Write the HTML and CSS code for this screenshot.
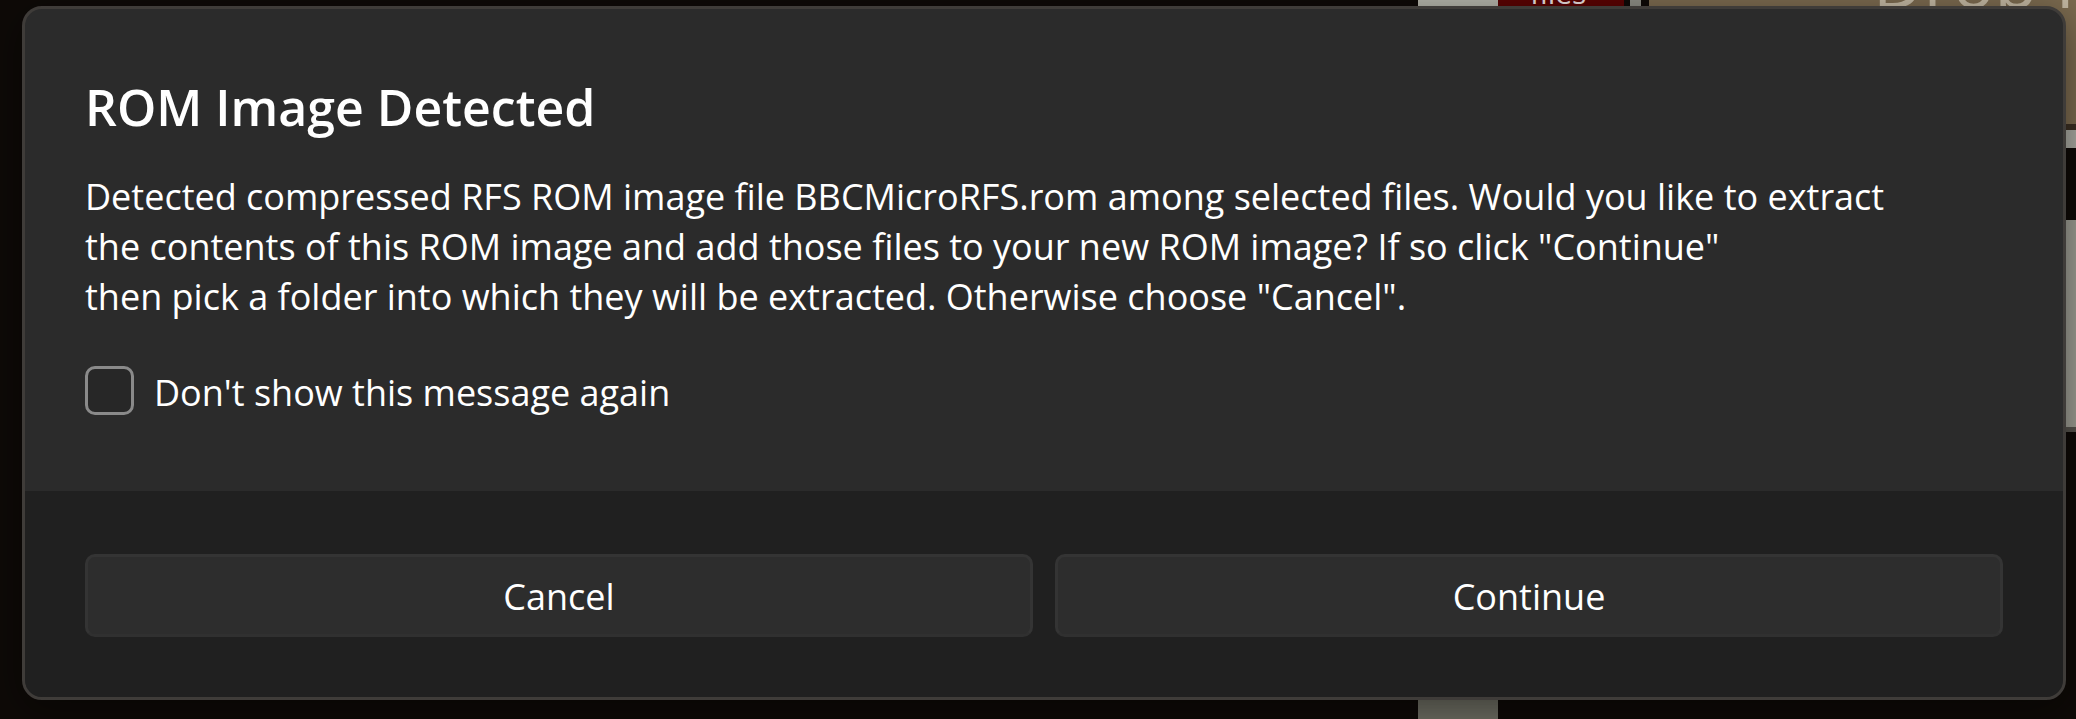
FILE: index.html
```html
<!DOCTYPE html>
<html lang="en">
<head>
<meta charset="utf-8">
<title>ROM Image Detected</title>
<link rel="stylesheet" href="styles.css">
</head>
<body>
<div class="app">
  <div class="app-blank"></div>
  <div class="app-pillar"></div>
  <div class="app-files">
    <div class="file-tile"><span class="file-tile-label">files</span></div>
  </div>
  <div class="app-divider"></div>
  <div class="app-panel">
    <div class="drop-zone"><span class="drop-zone-text">Drop Files</span></div>
    <div class="panel-edge"></div>
    <div class="panel-strip"></div>
    <div class="panel-gap"></div>
    <div class="panel-card">
      <span class="avatar"></span>
      <span class="card-badge"></span>
    </div>
  </div>
</div>

<div class="dialog" role="dialog" aria-labelledby="dlg-title">
  <div class="dialog-body">
    <h1 class="dialog-title" id="dlg-title">ROM Image Detected</h1>
    <p class="dialog-message">Detected compressed RFS ROM image file BBCMicroRFS.rom among selected files. Would you like to extract<br>the contents of this ROM image and add those files to your new ROM image? If so click "Continue"<br>then pick a folder into which they will be extracted. Otherwise choose "Cancel".</p>
    <label class="check">
      <span class="check-box"></span>
      <span class="check-label">Don't show this message again</span>
    </label>
  </div>
  <div class="dialog-footer">
    <button class="btn" type="button">Cancel</button>
    <button class="btn" type="button">Continue</button>
  </div>
</div>
</body>
</html>
```

FILE: styles.css
```css
html, body {
  margin: 0;
  padding: 0;
}

body {
  width: 2076px;
  height: 719px;
  overflow: hidden;
  background: #0e0a07;
  font-family: "Open Sans", "Noto Sans", "DejaVu Sans", sans-serif;
  color: #ffffff;
  position: relative;
}

/* ---------- background application (mostly hidden by the dialog) ---------- */
.app {
  display: grid;
  grid-template-columns: 1418px 80px 126px 25px 1fr;
  height: 719px;
}

.app-pillar {
  background: linear-gradient(to bottom, #b3b3a9 0, #b3b3a9 360px, #6e6e63 360px, #6e6e63 100%);
}

.app-files {
  display: flex;
  flex-direction: column;
}

.file-tile {
  height: 60px;
  background: #5a0303;
  overflow: hidden;
  padding-left: 32px;
}

.file-tile-label {
  display: block;
  font-size: 30px;
  line-height: 30px;
  margin-top: -22px;
  color: #e8dede;
}

.app-divider {
  background: linear-gradient(to bottom, #8d8d85 0, #8d8d85 40px, transparent 40px);
  margin: 0 8px 0 6px;
}

.app-panel {
  display: flex;
  flex-direction: column;
}

.drop-zone {
  height: 124px;
  background: #7b6a4f;
  overflow: hidden;
  padding-left: 224px;
}

.drop-zone-text {
  display: block;
  font-size: 70px;
  line-height: 70px;
  margin-top: -54px;
  color: #c2b7a2;
  white-space: nowrap;
}

.panel-edge {
  height: 6px;
  background: #3b2f23;
}

.panel-strip {
  height: 18px;
  background: #a9a9a1;
}

.panel-gap {
  height: 72px;
}

.panel-card {
  height: 212px;
  background: #9c9c92;
  display: flex;
  flex-direction: column;
  align-items: flex-end;
  padding-top: 30px;
  box-sizing: border-box;
  border-bottom: 5px solid #55524c;
}

.avatar {
  width: 44px;
  height: 44px;
  border-radius: 50%;
  background: #2f7db2;
  margin-right: -34px;
}

.card-badge {
  width: 20px;
  height: 80px;
  border-radius: 6px;
  background: #6a3431;
  margin-top: 43px;
  margin-right: -10px;
}

/* ---------- dialog ---------- */
.dialog {
  position: absolute;
  left: 22px;
  top: 6px;
  width: 2044px;
  height: 694px;
  box-sizing: border-box;
  border: 3px solid #3f3c39;
  border-radius: 20px;
  overflow: hidden;
  background: #2b2b2b;
  display: flex;
  flex-direction: column;
  box-shadow: 0 10px 40px rgba(0, 0, 0, 0.45);
}

.dialog-body {
  flex: 1 1 auto;
  padding: 63px 60px 0 60px;
}

.dialog-title {
  margin: 0 0 30px 0;
  font-size: 50px;
  line-height: 70px;
  font-weight: 600;
  white-space: nowrap;
}

.dialog-message {
  margin: 0;
  font-size: 36px;
  line-height: 50px;
  white-space: nowrap;
}

.check {
  display: flex;
  align-items: flex-start;
  gap: 20px;
  margin-top: 44px;
}

.check-box {
  flex: 0 0 auto;
  width: 49px;
  height: 49px;
  box-sizing: border-box;
  border: 3px solid #8a8a8a;
  border-radius: 10px;
  background: #272727;
}

.check-label {
  margin-top: 2px;
  font-size: 36px;
  line-height: 50px;
  white-space: nowrap;
}

.dialog-footer {
  flex: 0 0 auto;
  background: #202020;
  padding: 63px 60px 60px 60px;
  display: grid;
  grid-template-columns: 1fr 1fr;
  gap: 22px;
}

.btn {
  height: 83px;
  box-sizing: border-box;
  border: 3px solid #343434;
  border-bottom-color: #303030;
  border-radius: 10px;
  background: #2d2d2d;
  color: #ffffff;
  font-family: inherit;
  font-size: 36px;
  line-height: 50px;
  padding: 2px 0 0 0;
}
```
